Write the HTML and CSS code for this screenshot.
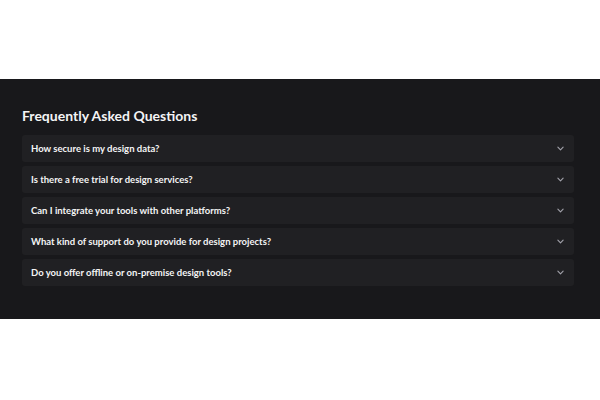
FILE: index.html
```html
<html>

<head>
    <meta charset="UTF-8">
    <meta name="viewport" content="width=device-width, initial-scale=1.0">
    <title>FAQ</title>

    <link rel="stylesheet" href="styles.css">
</head>

<body>
    <section class="faq">
        <h2 class="faq-title">Frequently Asked Questions</h2>

        <div class="faq-list">
            <div class="faq-item">
                <span>How secure is my design data?</span>
                <svg class="chevron" viewBox="0 0 8 5"><path d="M1 1l3 3 3-3" /></svg>
            </div>
            <div class="faq-item">
                <span>Is there a free trial for design services?</span>
                <svg class="chevron" viewBox="0 0 8 5"><path d="M1 1l3 3 3-3" /></svg>
            </div>
            <div class="faq-item">
                <span>Can I integrate your tools with other platforms?</span>
                <svg class="chevron" viewBox="0 0 8 5"><path d="M1 1l3 3 3-3" /></svg>
            </div>
            <div class="faq-item">
                <span>What kind of support do you provide for design projects?</span>
                <svg class="chevron" viewBox="0 0 8 5"><path d="M1 1l3 3 3-3" /></svg>
            </div>
            <div class="faq-item">
                <span>Do you offer offline or on-premise design tools?</span>
                <svg class="chevron" viewBox="0 0 8 5"><path d="M1 1l3 3 3-3" /></svg>
            </div>
        </div>
    </section>
</body>

</html>
```

FILE: styles.css
```css
:root {
    --section-bg: #18181b;
    --item-bg: #202023;
    --text-color: #f4f4f5;
    --icon-color: #a1a1aa;
}

body {
    margin: 0;
    padding-bottom: 2px;
    box-sizing: border-box;
    min-height: 100vh;
    display: flex;
    align-items: center;
    background: white;
    font-family: Lato, "Noto Sans", sans-serif;
}

.faq {
    width: 100%;
    box-sizing: border-box;
    height: 240px;
    padding: 27px 26px 0 22px;
    background: var(--section-bg);
}

.faq-title {
    margin: 0 0 9px 0;
    font-size: 14px;
    line-height: 20px;
    font-weight: 700;
    color: var(--text-color);
}

.faq-list {
    display: flex;
    flex-direction: column;
    gap: 4px;
}

.faq-item {
    height: 27px;
    padding: 0 9px;
    display: flex;
    align-items: center;
    justify-content: space-between;
    background: var(--item-bg);
    border-radius: 3px;
    font-size: 9.5px;
    font-weight: 700;
    color: var(--text-color);
}

.chevron {
    width: 7px;
    height: 5px;
    margin-right: 1px;
    fill: none;
    stroke: var(--icon-color);
    stroke-width: 1.3;
    stroke-linecap: round;
    stroke-linejoin: round;
}
```
